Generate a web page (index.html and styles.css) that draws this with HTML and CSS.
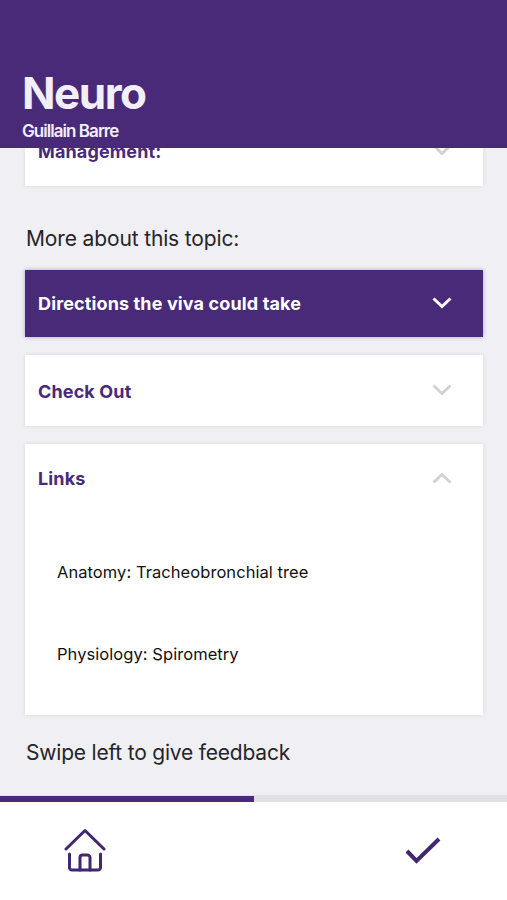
FILE: index.html
```html
<!DOCTYPE html>
<html lang="en">

<head>
    <meta charset="UTF-8">
    <meta name="viewport" content="width=device-width, initial-scale=1.0">
    <title>Neuro - Guillain Barre</title>
    <link rel="stylesheet" href="styles.css">
</head>

<body>

    <header class="header">
        <h1>Neuro</h1>
        <h2>Guillain Barre</h2>
    </header>

    <main class="content">
        <div class="card first">
            <div class="card-header">
                <h3>Management:</h3>
                <svg class="chevron" viewBox="0 0 20 12"><path d="M1.500 1.500l8.500 8 8.500-8" /></svg>
            </div>
        </div>

        <p class="section-title">More about this topic:</p>

        <div class="card active">
            <div class="card-header">
                <h3>Directions the viva could take</h3>
                <svg class="chevron" viewBox="0 0 20 12"><path d="M1.500 1.500l8.500 8 8.500-8" /></svg>
            </div>
        </div>

        <div class="card">
            <div class="card-header">
                <h3>Check Out</h3>
                <svg class="chevron" viewBox="0 0 20 12"><path d="M1.500 1.500l8.500 8 8.500-8" /></svg>
            </div>
        </div>

        <div class="card links">
            <div class="card-header">
                <h3>Links</h3>
                <svg class="chevron" viewBox="0 0 20 12"><path d="M1.500 10.500l8.500-8 8.500 8" /></svg>
            </div>
            <ul class="link-list">
                <li>Anatomy: Tracheobronchial tree</li>
                <li>Physiology: Spirometry</li>
            </ul>
        </div>

        <p class="section-title swipe">Swipe left to give feedback</p>
    </main>

    <div class="progress">
        <div class="progress-bar" style="width: 50.1%"></div>
    </div>

    <nav class="tab-bar">
        <svg class="home" viewBox="0 0 42 44">
            <path d="M2 21L21 2.500 40 21" />
            <path d="M5.500 26v13.500a2.500 2.500 0 0 0 2.500 2.500h26a2.500 2.500 0 0 0 2.500-2.500V26" />
            <path d="M16 42V29.500a2.500 2.500 0 0 1 2.500-2.500h5a2.500 2.500 0 0 1 2.500 2.500V42" />
        </svg>
        <svg class="check" viewBox="0 0 36 28">
            <path d="M2 14l9.500 10L34 2" />
        </svg>
    </nav>

</body>

</html>
```

FILE: styles.css
```css
body {
    font-family: Inter, "Liberation Sans", sans-serif;
    margin: 0;
    background-color: #f0eff4;
    display: flex;
    flex-direction: column;
    height: 900px;
    overflow: hidden;
}

h1,
h2,
h3,
p,
ul {
    margin: 0;
    padding: 0;
}

.header {
    box-sizing: border-box;
    flex: none;
    height: 148px;
    padding: 66px 22px 0;
    background-color: #482a79;
    color: #f3effa;
}

.header h1 {
    font-size: 44px;
    line-height: 54px;
    font-weight: 700;
    letter-spacing: -1.5px;
}

.header h2 {
    font-size: 17px;
    line-height: 22px;
    font-weight: 600;
    letter-spacing: -0.95px;
}

.content {
    flex: 1;
    min-height: 0;
    overflow: hidden;
    padding: 0 24px 0 25px;
}

.card {
    background-color: white;
    margin-bottom: 18px;
    box-shadow: 0 0 4px rgba(0, 0, 0, 0.1);
}

/* scrolled partly under the header */
.card.first {
    margin-top: -33px;
    margin-bottom: 0;
}

.card-header {
    box-sizing: border-box;
    height: 71px;
    padding: 0 31px 0 13px;
    display: flex;
    align-items: center;
    justify-content: space-between;
    color: #482a79;
}

.card h3 {
    font-size: 18px;
    line-height: 24px;
    padding-top: 2px;
    font-weight: 650;
    letter-spacing: 0.13px;
}

.card.active {
    background-color: #482a79;
    box-shadow: 0 0 4px rgba(72, 42, 121, 0.4);
}

.card.active .card-header {
    height: 67px;
    color: white;
}

.card.active h3 {
    padding-top: 1px;
}

.chevron {
    width: 20px;
    height: 12px;
    margin-bottom: 2px;
    fill: none;
    stroke: #d2d2d2;
    stroke-width: 3;
}

.active .chevron {
    stroke: white;
}

.section-title {
    height: 84px;
    line-height: 106px;
    padding-left: 1px;
    font-size: 21px;
    letter-spacing: -0.14px;
    color: #252528;
}

.card.links {
    height: 271px;
    margin-bottom: 0;
}

.links .card-header {
    height: 69px;
}

.links h3 {
    padding-top: 1px;
}

.link-list {
    list-style: none;
    padding: 18px 32px 0;
    font-size: 16.5px;
    letter-spacing: 0.06px;
    color: #111;
}

.link-list li {
    height: 82px;
    line-height: 82px;
}

.section-title.swipe {
    line-height: 76px;
    letter-spacing: -0.2px;
}

.progress {
    flex: none;
    height: 7px;
    padding-top: 1px;
    box-sizing: border-box;
    background-color: #e1e0e5;
}

.progress-bar {
    height: 6px;
    background-color: #482a79;
}

.tab-bar {
    box-sizing: border-box;
    flex: none;
    height: 98px;
    padding: 26px 66px 0 64px;
    display: flex;
    justify-content: space-between;
    background-color: white;
}

.tab-bar svg {
    fill: none;
    stroke: #41276f;
}

.home {
    width: 42px;
    height: 44px;
    stroke-width: 3;
    stroke-linecap: round;
    stroke-linejoin: round;
}

.check {
    width: 36px;
    height: 28px;
    margin-top: 9px;
    stroke-width: 4;
}
```
